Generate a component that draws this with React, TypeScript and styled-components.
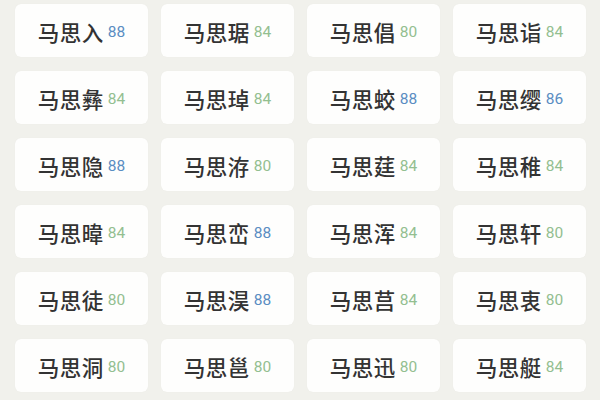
import React from "react";
import styled, { createGlobalStyle } from "styled-components";

const Global = createGlobalStyle`
  html, body { margin: 0; padding: 0; background: #f1f1ec; }
  body { font-family: "Noto Sans CJK SC", "Noto Sans", sans-serif; }
`;

const Grid = styled.div`
  display: grid;
  grid-template-columns: repeat(4, 133px);
  grid-auto-rows: 53px;
  column-gap: 13px;
  row-gap: 14px;
  padding: 4px 14px 0 15px;
  width: 600px;
  height: 400px;
  box-sizing: border-box;
  overflow: hidden;
`;

const Card = styled.div`
  background: #fefefd;
  border-radius: 6px;
  box-shadow: 0 0 1px rgba(0, 0, 0, 0.06);
  display: flex;
  align-items: center;
  justify-content: center;
  gap: 4px;
  padding-top: 2px;
  box-sizing: border-box;
`;

const Name = styled.span`
  font-family: "Noto Sans CJK SC", sans-serif;
  font-size: 21.5px;
  font-weight: 500;
  color: #333333;
  letter-spacing: 0.5px;
  line-height: 1;
`;

const Score = styled.span<{ $tone: "blue" | "green" }>`
  font-family: "Roboto", "Liberation Sans", sans-serif;
  font-size: 15.5px;
  line-height: 1;
  margin-top: 2px;
  color: ${(p) => (p.$tone === "blue" ? "#5a8dc2" : "#93bf90")};
`;

const items: [string, number][] = [
  ["马思入", 88], ["马思琚", 84], ["马思倡", 80], ["马思诣", 84],
  ["马思彝", 84], ["马思琸", 84], ["马思蛟", 88], ["马思缨", 86],
  ["马思隐", 88], ["马思洊", 80], ["马思莛", 84], ["马思稚", 84],
  ["马思暐", 84], ["马思峦", 88], ["马思浑", 84], ["马思轩", 80],
  ["马思徒", 80], ["马思淏", 88], ["马思莒", 84], ["马思衷", 80],
  ["马思洞", 80], ["马思邕", 80], ["马思迅", 80], ["马思艇", 84],
];

export default function App() {
  return (
    <>
      <Global />
      <Grid>
        {items.map(([name, score], i) => (
          <Card key={i}>
            <Name>{name}</Name>
            <Score $tone={score >= 86 ? "blue" : "green"}>{score}</Score>
          </Card>
        ))}
      </Grid>
    </>
  );
}
